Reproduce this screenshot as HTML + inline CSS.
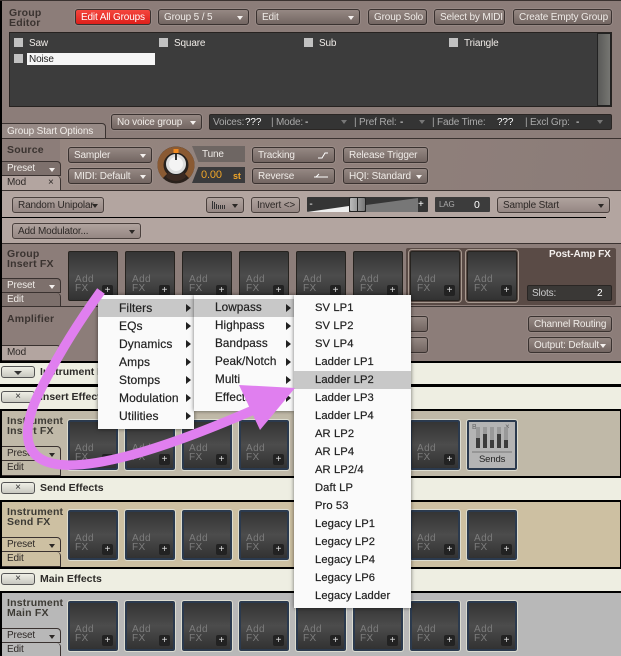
<!DOCTYPE html>
<html><head><meta charset="utf-8">
<style>
html,body{margin:0;padding:0;background:#eeeee2}
#r{position:relative;width:621px;height:656px;overflow:hidden;font:10px/14px "Liberation Sans",sans-serif;letter-spacing:-.15px;color:#f0ece8}
#r div,#r span.a{position:absolute;box-sizing:border-box;white-space:nowrap}
.k{background:#000}
.b{height:16px;border:1px solid #3a3230;border-radius:3px;background:linear-gradient(#958883,#736662);padding-left:5px;line-height:15px;box-shadow:0 0 0 1px rgba(200,190,185,.18)}
.l{background:linear-gradient(#b0a39e,#958783);color:#2d2826;border-color:#4a403d}
.c:after{content:"";position:absolute;right:5px;top:6px;border:3.5px solid transparent;border-top:4px solid #f4f0ee;border-bottom:0}
.l.c:after{border-top-color:#2c2826}
.h{font-weight:bold;color:#3a3330;font-size:10.5px;line-height:10px;letter-spacing:.2px}
.t{height:15px;padding-left:5px;border:1px solid #3a3230;border-left:0;border-radius:0 4px 0 0;line-height:14px}
.s{width:50px;height:50px;background:linear-gradient(#343434,#4c4c4c 50%,#323232);border:1px solid #26231f;border-radius:2px}
.s.o{outline:1px solid #a89a90;outline-offset:1px}
.s.n{border:2px solid #2b3a4e;outline:1px solid #dcdcd0;outline-offset:0}
.s i{position:absolute;left:6px;bottom:7px;font:10px/9px "Liberation Sans",sans-serif;color:#7c7c7c;letter-spacing:.4px}
.s.n i{left:5px;bottom:6px}
.s b{position:absolute;right:4px;bottom:4px;width:11px;height:11px;background:#222;border-radius:2px;color:#ddd;font:10px/11px "Liberation Sans",sans-serif;text-align:center;letter-spacing:0}
.s.n b{right:3px;bottom:3px}
.x{height:12px;left:1px;width:34px;border:1px solid #555;border-radius:3px;background:linear-gradient(#efefe6,#c8c8c0);color:#333;text-align:center;line-height:10px}
.q{color:#2c2a28;font-weight:bold;font-size:10.5px;letter-spacing:0;line-height:12px}
.m{background:#fafafa;box-shadow:0 0 4px rgba(0,0,0,.55);font-size:12px;letter-spacing:.1px;color:#222}
.m div{left:0;right:0;height:18px;line-height:18px;padding-left:21px;-webkit-text-stroke:.2px #222}
.m div.a1:after{content:"";position:absolute;right:3px;top:5px;border:4px solid transparent;border-left:5px solid #222;border-right:0}
.g{color:#aaa}.w{color:#fff}
.d{border:3px solid transparent;border-top:4px solid #777;border-bottom:0;top:120px}
</style></head><body><div id="r">

<!-- top panel -->
<div style="left:0;top:0;width:621px;height:362px;background:#8c7d79"></div>
<div class="k" style="left:0;top:0;width:2px;height:362px"></div>
<div style="left:0;top:0;width:621px;height:1px;background:#3a3230"></div>
<div style="left:2px;top:138px;width:619px;height:1px;background:#3a3230"></div>
<div style="left:60px;top:139px;width:561px;height:52px;background:linear-gradient(100deg,#95857f,#8b7c78)"></div>
<div style="left:2px;top:190px;width:619px;height:54px;background:#b3a5a0"></div>
<div style="left:60px;top:190px;width:561px;height:1px;background:#3a3230"></div>
<div class="k" style="left:2px;top:217px;width:604px;height:1px"></div>
<div style="left:2px;top:243px;width:619px;height:1px;background:#3a3230"></div>
<div style="left:2px;top:306px;width:619px;height:1px;background:#3a3230"></div>
<div class="k" style="left:0;top:361px;width:621px;height:2px"></div>

<!-- group editor -->
<div class="h" style="left:9px;top:8px">Group<br>Editor</div>
<div class="b" style="left:75px;top:9px;width:76px;background:linear-gradient(#f5463e,#dd1f1a);color:#fff">Edit All Groups</div>
<div class="b c" style="left:158px;top:9px;width:91px">Group 5 / 5</div>
<div class="b c" style="left:256px;top:9px;width:104px">Edit</div>
<div class="b" style="left:368px;top:9px;width:59px">Group Solo</div>
<div class="b" style="left:434px;top:9px;width:71px">Select by MIDI</div>
<div class="b" style="left:513px;top:9px;width:99px">Create Empty Group</div>

<div style="left:9px;top:32px;width:603px;height:75px;background:#3c3c3c;border:1px solid #262220"></div>
<div style="left:597px;top:33px;width:14px;height:73px;background:linear-gradient(90deg,#5a5a58,#767672);border:1px solid #222"></div>
<div style="left:14px;top:38px;width:9px;height:9px;background:#c2c2c2"></div><div style="left:29px;top:37px">Saw</div>
<div style="left:159px;top:38px;width:9px;height:9px;background:#c2c2c2"></div><div style="left:174px;top:37px">Square</div>
<div style="left:304px;top:38px;width:9px;height:9px;background:#c2c2c2"></div><div style="left:319px;top:37px">Sub</div>
<div style="left:449px;top:38px;width:9px;height:9px;background:#c2c2c2"></div><div style="left:464px;top:37px">Triangle</div>
<div style="left:14px;top:54px;width:9px;height:9px;background:#c2c2c2"></div>
<div style="left:27px;top:53px;width:128px;height:12px;background:#f6f6f6;color:#222;padding-left:2px;line-height:13px">Noise</div>

<div class="b c" style="left:111px;top:114px;width:91px">No voice group</div>
<div style="left:209px;top:114px;width:403px;height:16px;background:#343434;border:1px solid #2a2624;border-radius:2px"></div>
<div class="g" style="left:213px;top:116px">Voices:</div><div class="w" style="left:245px;top:116px">???</div>
<div class="g" style="left:271px;top:116px">|</div><div class="g" style="left:276px;top:116px">Mode:</div><div class="w" style="left:305px;top:116px">-</div>
<div class="d" style="left:341px"></div>
<div class="g" style="left:354px;top:116px">|</div><div class="g" style="left:359px;top:116px">Pref Rel:</div><div class="w" style="left:400px;top:116px">-</div>
<div class="d" style="left:419px"></div>
<div class="g" style="left:432px;top:116px">|</div><div class="g" style="left:437px;top:116px">Fade Time:</div>
<div class="w" style="left:497px;top:116px">???</div>
<div class="g" style="left:525px;top:116px">|</div><div class="g" style="left:530px;top:116px">Excl Grp:</div><div class="w" style="left:576px;top:116px">-</div>
<div class="d" style="left:597px"></div>

<div class="t" style="left:2px;top:123px;width:104px;height:16px;background:#968985;padding-left:5px;line-height:15px">Group Start Options</div>

<!-- source -->
<div class="h" style="left:7px;top:145px">Source</div>
<div class="t c" style="left:2px;top:161px;width:59px;background:#7d706c">Preset</div>
<div class="t" style="left:2px;top:176px;width:59px;height:15px;background:#b3a5a0;color:#2d2826;border-top:0">Mod<span class="a" style="left:46px;top:0">×</span></div>
<div class="b c" style="left:68px;top:147px;width:84px">Sampler</div>
<div class="b c" style="left:68px;top:168px;width:84px">MIDI: Default</div>
<svg style="position:absolute;left:157px;top:146px" width="38" height="38" viewBox="0 0 38 38">
<circle cx="19" cy="19" r="18.5" fill="#2a211c"/>
<path d="M8 30A15.5 15.5 0 1 1 30 30" fill="none" stroke="#8a5a33" stroke-width="6"/>
<path d="M9 31A15 15 0 0 0 29 31L26 25H12Z" fill="#3c2a22"/>
<rect x="16.500" y="3" width="5" height="4" fill="#f08a20"/>
<circle cx="19" cy="18" r="10.500" fill="#ddd" stroke="#222"/>
<circle cx="19" cy="18" r="7" fill="#f4f4f4"/>
<rect x="18" y="8" width="2" height="6" fill="#333"/>
</svg>
<div style="left:192px;top:146px;width:53px;height:16px;background:#6e6663;padding-left:10px;line-height:17px;clip-path:polygon(0 0,100% 0,100% 100%,12% 100%)">Tune</div>
<div style="left:192px;top:167px;width:53px;height:16px;background:#3a3a3c;color:#f0a528;padding-left:9px;line-height:16px;font-size:11px;clip-path:polygon(12% 0,100% 0,100% 100%,0 100%)">0.00<span class="a" style="left:41px;top:1px;font-weight:bold;font-size:9px">st</span></div>
<div class="b" style="left:252px;top:147px;width:83px">Tracking<svg style="position:absolute;left:64px;top:2px" width="12" height="10"><path d="M1 8H5L8 3H11" stroke="#fff" fill="none"/></svg></div>
<div class="b" style="left:252px;top:168px;width:83px">Reverse<svg style="position:absolute;left:60px;top:2px" width="16" height="10"><path d="M1 6H15M3 6L6 3" stroke="#fff" fill="none"/></svg></div>
<div class="b" style="left:343px;top:147px;width:85px">Release Trigger</div>
<div class="b c" style="left:343px;top:168px;width:85px">HQI: Standard</div>

<!-- mod row -->
<div class="b l c" style="left:12px;top:197px;width:92px">Random Unipolar</div>
<div class="b l c" style="left:206px;top:197px;width:38px"><svg style="position:absolute;left:4px;top:2px" width="16" height="10"><path d="M1.500 1V9M3.500 2V9M5.500 4V9M7.500 5V9M9.500 5V9M11.500 5V9M13.500 5V9" stroke="#333" fill="none"/></svg></div>
<div class="b l" style="left:251px;top:197px;width:49px">Invert &lt;&gt;</div>
<div style="left:307px;top:197px;width:121px;height:15px;background:#353535;border-radius:1px"></div>
<svg style="position:absolute;left:307px;top:197px" width="121" height="15"><polygon points="0,15 42,9 42,15" fill="#eee"/><polygon points="59,8 111,1 111,15 59,15" fill="#777"/></svg>
<div style="left:306px;top:197px;width:10px;color:#fff;line-height:15px;text-align:center;">-</div>
<div style="left:418px;top:197px;color:#fff;line-height:15px">+</div>
<div style="left:349px;top:197px;width:17px;height:15px;background:linear-gradient(90deg,#bbb,#777);border:1px solid #222;border-radius:2px"></div>
<div style="left:357px;top:198px;width:1px;height:13px;background:#222"></div>
<div style="left:435px;top:197px;width:55px;height:15px;background:#3c3c3c;border-radius:1px;padding-left:4px;font-size:8px;color:#aaa;line-height:15px">LAG</div>
<div style="left:474px;top:198px;color:#fff;font-size:10.500px">0</div>
<div class="b l c" style="left:497px;top:197px;width:113px">Sample Start</div>
<div class="b l c" style="left:12px;top:223px;width:129px">Add Modulator...</div>

<!-- group insert FX -->
<div class="h" style="left:7px;top:249px">Group<br>Insert FX</div>
<div style="left:406px;top:248px;width:210px;height:57px;background:#5a4b46;border-radius:2px"></div>
<div style="left:549px;top:248px;font-weight:bold;color:#f4f0ee;letter-spacing:-.1px">Post-Amp FX</div>
<div style="left:527px;top:285px;width:85px;height:16px;background:#3a3836;border:1px solid #2a2624;border-radius:2px;padding-left:4px;color:#ccc;line-height:15px">Slots:<span class="a" style="left:69px;top:0;color:#fff">2</span></div>
<div class="t c" style="left:2px;top:278px;width:59px;background:#7d706c">Preset</div>
<div class="t" style="left:2px;top:293px;width:59px;background:#7d706c;border-top:0;height:14px">Edit</div>
<div class="s" style="left:68px;top:251px"><i>Add<br>FX</i><b>+</b></div>
<div class="s" style="left:125px;top:251px"><i>Add<br>FX</i><b>+</b></div>
<div class="s" style="left:182px;top:251px"><i>Add<br>FX</i><b>+</b></div>
<div class="s" style="left:239px;top:251px"><i>Add<br>FX</i><b>+</b></div>
<div class="s" style="left:296px;top:251px"><i>Add<br>FX</i><b>+</b></div>
<div class="s" style="left:353px;top:251px"><i>Add<br>FX</i><b>+</b></div>
<div class="s o" style="left:410px;top:251px"><i>Add<br>FX</i><b>+</b></div>
<div class="s o" style="left:467px;top:251px"><i>Add<br>FX</i><b>+</b></div>

<!-- amplifier -->
<div class="h" style="left:7px;top:314px">Amplifier</div>
<div class="t" style="left:2px;top:345px;width:59px;height:16px;background:#b3a5a0;color:#2d2826;border-top:1px solid #3a3230">Mod</div>
<div class="b" style="left:300px;top:316px;width:128px"></div>
<div class="b" style="left:300px;top:337px;width:128px"></div>
<div class="b" style="left:528px;top:316px;width:84px">Channel Routing</div>
<div class="b c" style="left:528px;top:337px;width:84px">Output: Default</div>

<!-- strips -->
<div class="x" style="top:366px"></div>
<div style="left:14px;top:371px;border:4px solid transparent;border-top:4px solid #333;border-bottom:0"></div>
<div class="q" style="left:40px;top:366px">Instrument Buses</div>
<div class="k" style="left:0;top:384px;width:621px;height:3px"></div>
<div class="x" style="top:391px">×</div>
<div class="q" style="left:40px;top:391px">Insert Effects</div>
<div class="k" style="left:0;top:409px;width:621px;height:69px"></div>
<div style="left:2px;top:411px;width:618px;height:65px;background:#c0b9a8"></div>
<div class="x" style="top:482px">×</div>
<div class="q" style="left:40px;top:482px">Send Effects</div>
<div class="k" style="left:0;top:500px;width:621px;height:69px"></div>
<div style="left:2px;top:502px;width:618px;height:65px;background:#cdc0a2"></div>
<div class="x" style="top:573px">×</div>
<div class="q" style="left:40px;top:573px">Main Effects</div>
<div class="k" style="left:0;top:591px;width:621px;height:65px"></div>
<div style="left:2px;top:593px;width:619px;height:63px;background:#b8b8b8"></div>

<!-- instrument insert -->
<div class="h" style="left:7px;top:416px;color:#3c3a34">Instrument<br>Insert FX</div>
<div class="t c l" style="left:2px;top:446px;width:59px;border-radius:0 4px 0 0;background:#c0b9a8">Preset</div>
<div class="t" style="left:2px;top:461px;width:59px;color:#2d2826;border-top:0">Edit</div>
<div class="s n" style="left:68px;top:420px"><i>Add<br>FX</i><b>+</b></div>
<div class="s n" style="left:125px;top:420px"><i>Add<br>FX</i><b>+</b></div>
<div class="s n" style="left:182px;top:420px"><i>Add<br>FX</i><b>+</b></div>
<div class="s n" style="left:239px;top:420px"><i>Add<br>FX</i><b>+</b></div>
<div class="s n" style="left:296px;top:420px"><i>Add<br>FX</i><b>+</b></div>
<div class="s n" style="left:353px;top:420px"><i>Add<br>FX</i><b>+</b></div>
<div class="s n" style="left:410px;top:420px"><i>Add<br>FX</i><b>+</b></div>
<div class="s n" style="left:467px;top:420px;background:#b4b4b4"></div>
<svg style="position:absolute;left:468px;top:421px" width="48" height="48"><text x="4" y="8" font-family="Liberation Sans" font-size="7" fill="#666">B</text><text x="37" y="8" font-family="Liberation Sans" font-size="8" fill="#666">×</text>
<path d="M10 6V27M17 6V27M24 6V27M31 6V27M38 6V27" stroke="#999" stroke-width="4"/>
<path d="M10 17V27M17 13V27M24 19V27M31 13V27M38 19V27" stroke="#3c3c3c" stroke-width="4"/>
<path d="M4 31H44" stroke="#777"/>
<text x="11" y="41" font-family="Liberation Sans" font-size="9.500" fill="#222">Sends</text></svg>

<!-- instrument send -->
<div class="h" style="left:7px;top:507px;color:#3c3a34">Instrument<br>Send FX</div>
<div class="t c l" style="left:2px;top:537px;width:59px;background:#cdc0a2">Preset</div>
<div class="t" style="left:2px;top:552px;width:59px;color:#2d2826;border-top:0">Edit</div>
<div class="s n" style="left:68px;top:510px"><i>Add<br>FX</i><b>+</b></div>
<div class="s n" style="left:125px;top:510px"><i>Add<br>FX</i><b>+</b></div>
<div class="s n" style="left:182px;top:510px"><i>Add<br>FX</i><b>+</b></div>
<div class="s n" style="left:239px;top:510px"><i>Add<br>FX</i><b>+</b></div>
<div class="s n" style="left:296px;top:510px"><i>Add<br>FX</i><b>+</b></div>
<div class="s n" style="left:353px;top:510px"><i>Add<br>FX</i><b>+</b></div>
<div class="s n" style="left:410px;top:510px"><i>Add<br>FX</i><b>+</b></div>
<div class="s n" style="left:467px;top:510px"><i>Add<br>FX</i><b>+</b></div>

<!-- instrument main -->
<div class="h" style="left:7px;top:598px;color:#3c3a34">Instrument<br>Main FX</div>
<div class="t c l" style="left:2px;top:628px;width:59px;background:#b8b8b8">Preset</div>
<div class="t" style="left:2px;top:643px;width:59px;color:#2d2826;border-top:0">Edit</div>
<div class="s n" style="left:68px;top:601px"><i>Add<br>FX</i><b>+</b></div>
<div class="s n" style="left:125px;top:601px"><i>Add<br>FX</i><b>+</b></div>
<div class="s n" style="left:182px;top:601px"><i>Add<br>FX</i><b>+</b></div>
<div class="s n" style="left:239px;top:601px"><i>Add<br>FX</i><b>+</b></div>
<div class="s n" style="left:296px;top:601px"><i>Add<br>FX</i><b>+</b></div>
<div class="s n" style="left:353px;top:601px"><i>Add<br>FX</i><b>+</b></div>
<div class="s n" style="left:410px;top:601px"><i>Add<br>FX</i><b>+</b></div>
<div class="s n" style="left:467px;top:601px"><i>Add<br>FX</i><b>+</b></div>

<!-- menus -->
<div class="m" style="left:98px;top:295px;width:96px;height:134px">
<div class="a1" style="top:4px;background:#c8c8c8">Filters</div>
<div class="a1" style="top:22px">EQs</div>
<div class="a1" style="top:40px">Dynamics</div>
<div class="a1" style="top:58px">Amps</div>
<div class="a1" style="top:76px">Stomps</div>
<div class="a1" style="top:94px">Modulation</div>
<div class="a1" style="top:112px">Utilities</div>
</div>
<div class="m" style="left:194px;top:295px;width:100px;height:116px;font-size:11.7px">
<div class="a1" style="top:4px;background:#c8c8c8">Lowpass</div>
<div class="a1" style="top:22px">Highpass</div>
<div class="a1" style="top:40px">Bandpass</div>
<div class="a1" style="top:58px">Peak/Notch</div>
<div class="a1" style="top:76px">Multi</div>
<div class="a1" style="top:94px">Effects</div>
</div>
<div class="m m3" style="left:294px;top:295px;width:117px;height:313px;font-size:11.2px">
<div style="top:4px;line-height:19px">SV LP1</div>
<div style="top:22px;line-height:19px">SV LP2</div>
<div style="top:40px;line-height:19px">SV LP4</div>
<div style="top:58px;line-height:19px">Ladder LP1</div>
<div style="top:76px;line-height:19px;background:#c8c8c8">Ladder LP2</div>
<div style="top:94px;line-height:19px">Ladder LP3</div>
<div style="top:112px;line-height:19px">Ladder LP4</div>
<div style="top:130px;line-height:19px">AR LP2</div>
<div style="top:148px;line-height:19px">AR LP4</div>
<div style="top:166px;line-height:19px">AR LP2/4</div>
<div style="top:184px;line-height:19px">Daft LP</div>
<div style="top:202px;line-height:19px">Pro 53</div>
<div style="top:220px;line-height:19px">Legacy LP1</div>
<div style="top:238px;line-height:19px">Legacy LP2</div>
<div style="top:256px;line-height:19px">Legacy LP4</div>
<div style="top:274px;line-height:19px">Legacy LP6</div>
<div style="top:292px;line-height:19px">Legacy Ladder</div>
</div>

<!-- pink arrow -->
<svg style="position:absolute;left:0;top:0" width="621" height="656">
<path d="M101 291C80 320 56 358 38 395C22 430 20 463 65 465C110 467 185 440 258 408" fill="none" stroke="#e07fef" stroke-width="9.500"/>
<polygon points="239,385 295,388 260,430" fill="#e07fef"/>
</svg>
</div></body></html>
